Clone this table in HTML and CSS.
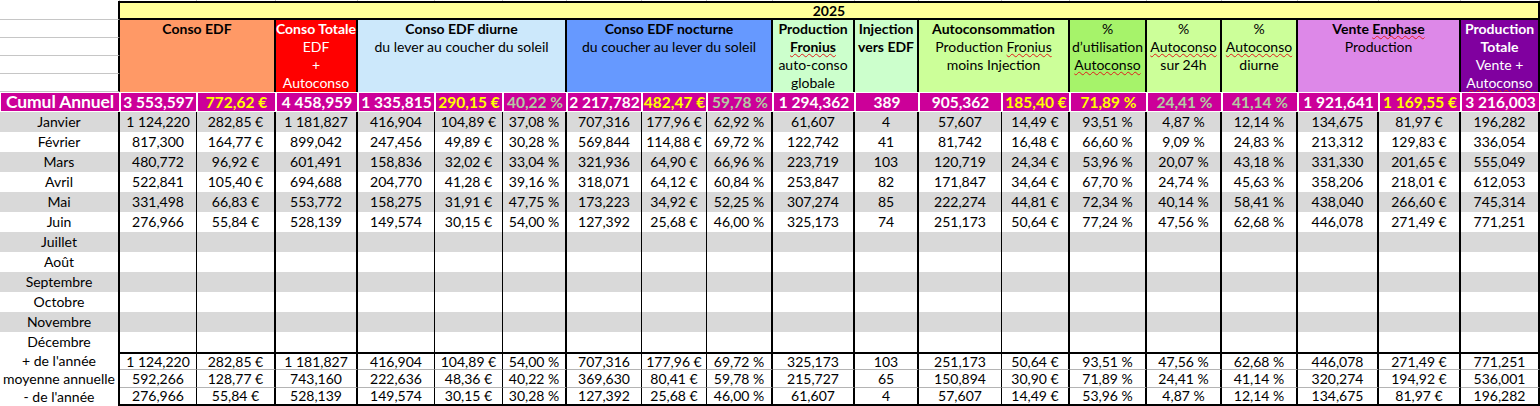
FILE: index.html
```html
<!DOCTYPE html>
<html lang="fr">
<head>
<meta charset="utf-8">
<title>Conso 2025</title>
<link rel="stylesheet" href="styles.css">
</head>
<body>
<div class="sheet">
  <div class="head">
    <div class="stub"></div><div class="stub"></div><div class="stub"></div><div class="stub"></div><div class="stub"></div>
    <div class="stub"></div><div class="stub"></div><div class="stub"></div><div class="stub"></div><div class="stub"></div>
    <div class="stub"></div><div class="stub"></div><div class="stub"></div><div class="stub"></div><div class="stub"></div>
    <div class="stub"></div><div class="stub"></div><div class="stub"></div><div class="stub"></div><div class="stub"></div>

    <div class="hA"></div>
    <div class="year">2025</div>

    <div class="hA"></div>
    <div class="hc span2 orange"><b>Conso EDF</b></div>
    <div class="hc red"><b>Conso Totale</b><span>EDF</span><span>+</span><span>Autoconso</span></div>
    <div class="hc span3 sky"><b>Conso EDF diurne</b><span>du lever au coucher du soleil</span></div>
    <div class="hc span3 blue"><b>Conso EDF nocturne</b><span>du coucher au lever du soleil</span></div>
    <div class="hc mint"><b>Production</b><b class="sp">Fronius</b><span>auto-conso</span><span>globale</span></div>
    <div class="hc mint"><b>Injection</b><b>vers EDF</b></div>
    <div class="hc span2 lime"><b>Autoconsommation</b><span>Production <i class="sp">Fronius</i></span><span>moins Injection</span></div>
    <div class="hc green"><span>%</span><span>d’utilisation</span><span class="sp">Autoconso</span></div>
    <div class="hc lime"><span>%</span><span class="sp">Autoconso</span><span>sur 24h</span></div>
    <div class="hc lime"><span>%</span><span class="sp">Autoconso</span><span>diurne</span></div>
    <div class="hc span2 violet"><b>Vente <i class="sp">Enphase</i></b><span>Production</span></div>
    <div class="hc purple"><b>Production</b><b>Totale</b><span>Vente +</span><span class="sp">Autoconso</span></div>
    <div class="hA"></div>
    <div class="hA"></div>
    <div class="hA"></div>
  </div>

  <div class="row cumul">
    <div class="lbl">Cumul Annuel</div><div>3 553,597</div><div class="yel">772,62 €</div><div>4 458,959</div><div>1 335,815</div><div class="yel">290,15 €</div><div class="sage">40,22 %</div><div>2 217,782</div><div class="yel">482,47 €</div><div class="sage">59,78 %</div><div>1 294,362</div><div>389</div><div>905,362</div><div class="yel">185,40 €</div><div class="yel">71,89 %</div><div class="sage">24,41 %</div><div class="sage">41,14 %</div><div>1 921,641</div><div class="yel">1 169,55 €</div><div>3 216,003</div>
  </div>

  <div class="row alt">
    <div>Janvier</div><div>1 124,220</div><div>282,85 €</div><div>1 181,827</div><div>416,904</div><div>104,89 €</div><div>37,08 %</div><div>707,316</div><div>177,96 €</div><div>62,92 %</div><div>61,607</div><div>4</div><div>57,607</div><div>14,49 €</div><div>93,51 %</div><div>4,87 %</div><div>12,14 %</div><div>134,675</div><div>81,97 €</div><div>196,282</div>
  </div>
  <div class="row">
    <div>Février</div><div>817,300</div><div>164,77 €</div><div>899,042</div><div>247,456</div><div>49,89 €</div><div>30,28 %</div><div>569,844</div><div>114,88 €</div><div>69,72 %</div><div>122,742</div><div>41</div><div>81,742</div><div>16,48 €</div><div>66,60 %</div><div>9,09 %</div><div>24,83 %</div><div>213,312</div><div>129,83 €</div><div>336,054</div>
  </div>
  <div class="row alt">
    <div>Mars</div><div>480,772</div><div>96,92 €</div><div>601,491</div><div>158,836</div><div>32,02 €</div><div>33,04 %</div><div>321,936</div><div>64,90 €</div><div>66,96 %</div><div>223,719</div><div>103</div><div>120,719</div><div>24,34 €</div><div>53,96 %</div><div>20,07 %</div><div>43,18 %</div><div>331,330</div><div>201,65 €</div><div>555,049</div>
  </div>
  <div class="row">
    <div>Avril</div><div>522,841</div><div>105,40 €</div><div>694,688</div><div>204,770</div><div>41,28 €</div><div>39,16 %</div><div>318,071</div><div>64,12 €</div><div>60,84 %</div><div>253,847</div><div>82</div><div>171,847</div><div>34,64 €</div><div>67,70 %</div><div>24,74 %</div><div>45,63 %</div><div>358,206</div><div>218,01 €</div><div>612,053</div>
  </div>
  <div class="row alt">
    <div>Mai</div><div>331,498</div><div>66,83 €</div><div>553,772</div><div>158,275</div><div>31,91 €</div><div>47,75 %</div><div>173,223</div><div>34,92 €</div><div>52,25 %</div><div>307,274</div><div>85</div><div>222,274</div><div>44,81 €</div><div>72,34 %</div><div>40,14 %</div><div>58,41 %</div><div>438,040</div><div>266,60 €</div><div>745,314</div>
  </div>
  <div class="row">
    <div>Juin</div><div>276,966</div><div>55,84 €</div><div>528,139</div><div>149,574</div><div>30,15 €</div><div>54,00 %</div><div>127,392</div><div>25,68 €</div><div>46,00 %</div><div>325,173</div><div>74</div><div>251,173</div><div>50,64 €</div><div>77,24 %</div><div>47,56 %</div><div>62,68 %</div><div>446,078</div><div>271,49 €</div><div>771,251</div>
  </div>
  <div class="row alt">
    <div>Juillet</div><div></div><div></div><div></div><div></div><div></div><div></div><div></div><div></div><div></div><div></div><div></div><div></div><div></div><div></div><div></div><div></div><div></div><div></div><div></div>
  </div>
  <div class="row">
    <div>Août</div><div></div><div></div><div></div><div></div><div></div><div></div><div></div><div></div><div></div><div></div><div></div><div></div><div></div><div></div><div></div><div></div><div></div><div></div><div></div>
  </div>
  <div class="row alt">
    <div>Septembre</div><div></div><div></div><div></div><div></div><div></div><div></div><div></div><div></div><div></div><div></div><div></div><div></div><div></div><div></div><div></div><div></div><div></div><div></div><div></div>
  </div>
  <div class="row">
    <div>Octobre</div><div></div><div></div><div></div><div></div><div></div><div></div><div></div><div></div><div></div><div></div><div></div><div></div><div></div><div></div><div></div><div></div><div></div><div></div><div></div>
  </div>
  <div class="row alt">
    <div>Novembre</div><div></div><div></div><div></div><div></div><div></div><div></div><div></div><div></div><div></div><div></div><div></div><div></div><div></div><div></div><div></div><div></div><div></div><div></div><div></div>
  </div>
  <div class="row">
    <div>Décembre</div><div></div><div></div><div></div><div></div><div></div><div></div><div></div><div></div><div></div><div></div><div></div><div></div><div></div><div></div><div></div><div></div><div></div><div></div><div></div>
  </div>

  <div class="row sum first">
    <div>+ de l'année</div><div>1 124,220</div><div>282,85 €</div><div>1 181,827</div><div>416,904</div><div>104,89 €</div><div>54,00 %</div><div>707,316</div><div>177,96 €</div><div>69,72 %</div><div>325,173</div><div>103</div><div>251,173</div><div>50,64 €</div><div>93,51 %</div><div>47,56 %</div><div>62,68 %</div><div>446,078</div><div>271,49 €</div><div>771,251</div>
  </div>
  <div class="row sum">
    <div>moyenne annuelle</div><div>592,266</div><div>128,77 €</div><div>743,160</div><div>222,636</div><div>48,36 €</div><div>40,22 %</div><div>369,630</div><div>80,41 €</div><div>59,78 %</div><div>215,727</div><div>65</div><div>150,894</div><div>30,90 €</div><div>71,89 %</div><div>24,41 %</div><div>41,14 %</div><div>320,274</div><div>194,92 €</div><div>536,001</div>
  </div>
  <div class="row sum last">
    <div>- de l'année</div><div>276,966</div><div>55,84 €</div><div>528,139</div><div>149,574</div><div>30,15 €</div><div>30,28 %</div><div>127,392</div><div>25,68 €</div><div>46,00 %</div><div>61,607</div><div>4</div><div>57,607</div><div>14,49 €</div><div>53,96 %</div><div>4,87 %</div><div>12,14 %</div><div>134,675</div><div>81,97 €</div><div>196,282</div>
  </div>
</div>
</body>
</html>
```
FILE: styles.css
```css
:root {
  --cols: 120px 77px 79px 82px 77px 68px 64px 75px 65px 66px 82px 64px 83px 68px 77px 75px 76px 81px 82px 79px;
}

* { box-sizing: border-box; }

html, body {
  margin: 0;
  padding: 0;
  background: #ffffff;
}

body {
  font-family: Lato, "Liberation Sans", sans-serif;
  font-size: 14px;
  color: #000000;
  width: 1540px;
  height: 406px;
  overflow: hidden;
}

.sheet {
  display: flex;
  flex-direction: column;
  width: 1540px;
}

/* ---------- header block ---------- */
.head {
  display: grid;
  grid-template-columns: var(--cols);
  grid-template-rows: 1px 19px 18px 18px 18px 18px;
}

.stub {
  border-right: 1px solid #c6c6c6;
}

.hA {
  grid-column: 1;
  background: #ffffff;
  border-right: 2px solid #000000;
  border-bottom: 1px solid #c6c6c6;
}

.year {
  grid-column: 2 / span 19;
  background: #ffff99;
  border-top: 2px solid #000000;
  border-right: 2px solid #000000;
  border-bottom: 2px solid #000000;
  text-align: center;
  font-weight: 700;
  line-height: 15px;
}

.hc {
  grid-row: span 4;
  border-right: 2px solid #000000;
  display: flex;
  flex-direction: column;
  align-items: center;
  text-align: center;
  line-height: 18px;
  white-space: nowrap;
}

.hc b, .hc span { display: block; }
.hc i { font-style: normal; }

.span2 { grid-column: span 2; }
.span3 { grid-column: span 3; }

.orange { background: #ff9966; }
.red    { background: #ff0000; color: #ffffff; }
.sky    { background: #cce8fb; }
.blue   { background: #6699ff; }
.mint   { background: #ccffcc; }
.lime   { background: #ccff99; }
.green  { background: #a6f36a; }
.violet { background: #dd88e8; }
.purple { background: #80009f; color: #ffffff; }

.sp {
  text-decoration: underline wavy #e01b1b;
  text-decoration-thickness: 1px;
  text-underline-offset: 1px;
  text-decoration-skip-ink: none;
}

/* ---------- data rows ---------- */
.row {
  display: grid;
  grid-template-columns: var(--cols);
  height: 20px;
}

.row > div {
  border-right: 2px solid #000000;
  text-align: center;
  line-height: 20px;
  white-space: nowrap;
}

.row > div:nth-child(2),
.row > div:nth-child(5),
.row > div:nth-child(6),
.row > div:nth-child(8),
.row > div:nth-child(9),
.row > div:nth-child(13) {
  border-right-width: 1px;
}

.row.alt > div { background: #d9d9d9; }

/* cumulative row */
.row.cumul > div {
  background: #cc0099;
  border: 1px solid #ffffff;
  color: #ffffff;
  font-weight: 700;
  font-size: 15.5px;
  line-height: 18px;
}

.row.cumul > .lbl  { font-size: 17.5px; letter-spacing: -0.1px; }
.row.cumul > .yel  { color: #ffff00; }
.row.cumul > .sage { color: #b3cba3; }

/* summary rows */
.row.sum { height: 18px; }

.row.sum > div {
  line-height: 17px;
  border-bottom: 1px solid #b4b4b4;
}

.row.sum > div:first-child {
  border-bottom: none;
  line-height: 18px;
}

.row.sum.first > div:not(:first-child) {
  border-top: 2px solid #000000;
  line-height: 15px;
}

.row.sum.last > div:not(:first-child) {
  border-bottom: 2px solid #000000;
  line-height: 16px;
}
```
